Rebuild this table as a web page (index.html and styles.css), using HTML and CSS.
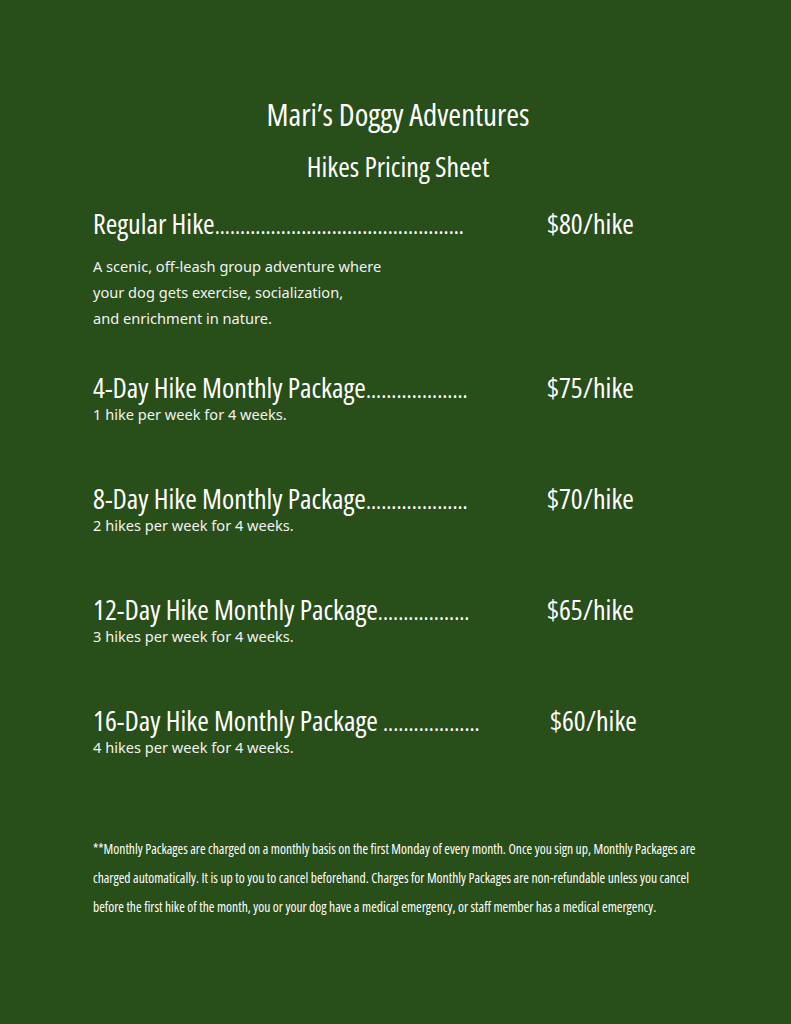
FILE: index.html
```html
<!DOCTYPE html>
<html lang="en">
<head>
<meta charset="utf-8">
<title>Hikes Pricing Sheet</title>
<link rel="stylesheet" href="styles.css">
</head>
<body>
<main class="page">
  <header class="header">
    <h1 class="title">Mari’s Doggy Adventures</h1>
    <h2 class="subtitle">Hikes Pricing Sheet</h2>
  </header>

  <section class="item item--first">
    <div class="item-head">
      <span class="name">Regular Hike<span class="dots">.................................................</span></span>
      <span class="price">$80/hike</span>
    </div>
    <p class="desc">A scenic, off-leash group adventure where<br>your dog gets exercise, socialization,<br>and enrichment in nature.</p>
  </section>

  <section class="item">
    <div class="item-head">
      <span class="name">4-Day Hike Monthly Package<span class="dots">....................</span></span>
      <span class="price">$75/hike</span>
    </div>
    <p class="sub">1 hike per week for 4 weeks.</p>
  </section>

  <section class="item">
    <div class="item-head">
      <span class="name">8-Day Hike Monthly Package<span class="dots">....................</span></span>
      <span class="price">$70/hike</span>
    </div>
    <p class="sub">2 hikes per week for 4 weeks.</p>
  </section>

  <section class="item">
    <div class="item-head">
      <span class="name">12-Day Hike Monthly Package<span class="dots">..................</span></span>
      <span class="price">$65/hike</span>
    </div>
    <p class="sub">3 hikes per week for 4 weeks.</p>
  </section>

  <section class="item">
    <div class="item-head">
      <span class="name">16-Day Hike Monthly Package <span class="dots">...................</span></span>
      <span class="price price--shift">$60/hike</span>
    </div>
    <p class="sub">4 hikes per week for 4 weeks.</p>
  </section>

  <p class="note">**Monthly Packages are charged on a monthly basis on the first Monday of every month. Once you sign up, Monthly Packages are<br>charged automatically. It is up to you to cancel beforehand. Charges for Monthly Packages are non-refundable unless you cancel<br>before the first hike of the month, you or your dog have a medical emergency, or staff member has a medical emergency.</p>
</main>
</body>
</html>
```
FILE: styles.css
```css
html, body {
  margin: 0;
  padding: 0;
  background: #284e19;
}

body {
  color: #ffffff;
  font-family: "Open Sans", "DejaVu Sans Condensed", sans-serif;
  font-stretch: 75%;
}

.page {
  width: 791px;
  min-height: 1024px;
  box-sizing: border-box;
  padding: 96px 0 0 93px;
}

.header {
  display: flex;
  flex-direction: column;
  align-items: center;
  width: 610px;
}

.title {
  margin: 0;
  font-weight: 500;
  font-size: 31px;
  line-height: 36px;
}

.subtitle {
  margin: 18px 0 0;
  font-weight: 500;
  font-size: 28px;
  line-height: 32px;
}

.item {
  margin-top: 57px;
}

.item--first {
  margin-top: 25px;
}

.item--first + .item {
  margin-top: 40px;
}

.item-head {
  display: flex;
  align-items: baseline;
  font-size: 28px;
  font-weight: 500;
  line-height: 32px;
  height: 32px;
}

.name {
  width: 454px;
  flex: none;
  white-space: nowrap;
}

.dots {
  font-size: 23px;
  font-weight: 400;
}

.price {
  white-space: nowrap;
}

.price--shift {
  padding-left: 3px;
}

.desc,
.sub {
  margin: 0;
  font-family: "Noto Sans", "Open Sans", sans-serif;
  font-stretch: 100%;
  font-size: 14.6px;
  color: #f2f2f2;
}

.desc {
  margin-top: 14px;
  line-height: 26px;
}

.sub {
  line-height: 22px;
}

.note {
  margin: 76px 0 0;
  font-size: 13.6px;
  line-height: 29px;
  white-space: nowrap;
}
```
